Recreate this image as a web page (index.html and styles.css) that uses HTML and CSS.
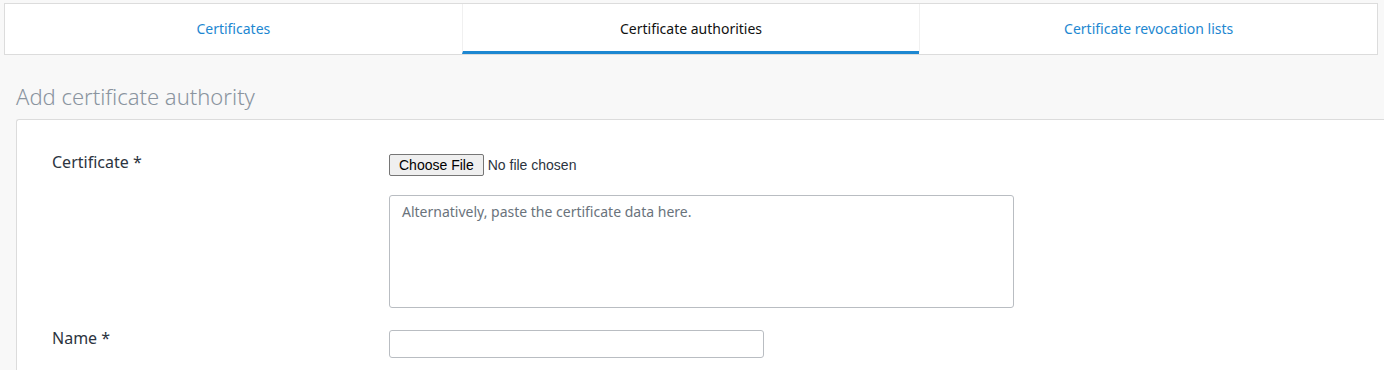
FILE: index.html
```html
<!DOCTYPE html>
<html lang="en">
<head>
    <meta charset="UTF-8">
    <title>Certificate authorities</title>
    <link rel="stylesheet" href="styles.css">
</head>
<body>
    <div class="tabs">
        <a class="tab" href="#">Certificates</a>
        <a class="tab active" href="#">Certificate authorities</a>
        <a class="tab" href="#">Certificate revocation lists</a>
    </div>

    <h2 class="title">Add certificate authority</h2>

    <div class="panel">
        <div class="row">
            <label class="label">Certificate *</label>
            <div class="field">
                <input type="file" class="file">
                <textarea class="area" placeholder="Alternatively, paste the certificate data here."></textarea>
            </div>
        </div>
        <div class="row">
            <label class="label">Name *</label>
            <div class="field">
                <input type="text" class="text">
            </div>
        </div>
    </div>
</body>
</html>
```

FILE: styles.css
```css
body {
    margin: 0;
    padding: 3px 0 0 0;
    background-color: #f8f8f8;
    font-family: "Noto Sans", Roboto, sans-serif;
    color: #2c3440;
    overflow: hidden;
}
.tabs {
    display: flex;
    margin: 0 6px 0 4px;
    border: 1px solid #dcdcdc;
    background-color: white;
}
.tab {
    flex: 1;
    height: 47px;
    line-height: 49px;
    text-align: center;
    font-size: 14px;
    color: #1d87d1;
    text-decoration: none;
    border-bottom: 3px solid transparent;
    border-left: 1px solid #f0f0f0;
}
.tab:first-child {
    border-left: none;
}
.tab.active {
    color: #111;
    border-bottom-color: #1d87d1;
}
.title {
    margin: 28px 0 0 16px;
    height: 36px;
    font-size: 22px;
    font-weight: 300;
    color: #8a949f;
    line-height: 26px;
}
.panel {
    margin-left: 16px;
    background-color: white;
    border: 1px solid #dcdcdc;
    border-right: none;
    border-top-left-radius: 3px;
    padding: 34px 0 20px 35px;
}
.row {
    display: flex;
    margin-bottom: 22px;
}
.label {
    width: 337px;
    font-size: 16px;
    line-height: 16px;
    color: #2c3440;
}
.field {
    display: flex;
    flex-direction: column;
    align-items: flex-start;
}
.file {
    font-family: Arial, "Liberation Sans", sans-serif;
    font-size: 14px;
    margin: 0 0 19px 0;
    height: 22px;
}
.file::file-selector-button {
    font-family: Arial, "Liberation Sans", sans-serif;
    font-size: 14px;
    height: 22px;
    padding: 1px 9px;
    margin-right: 4px;
    border: 1px solid #767676;
    border-radius: 2px;
    background-color: #efefef;
}
.area {
    width: 625px;
    height: 113px;
    box-sizing: border-box;
    border: 1px solid #b9bdc2;
    border-radius: 3px;
    padding: 6px 12px;
    resize: none;
    font-family: "Noto Sans", Roboto, sans-serif;
    font-size: 14px;
}
.area::placeholder {
    color: #6a737c;
}
.text {
    width: 375px;
    height: 28px;
    box-sizing: border-box;
    border: 1px solid #b9bdc2;
    border-radius: 3px;
    margin-top: 0;
}
```
